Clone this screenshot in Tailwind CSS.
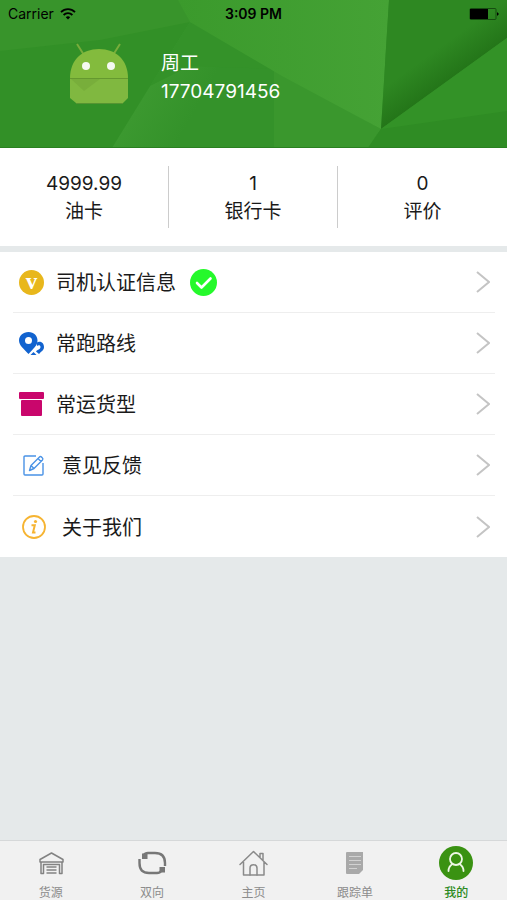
<!DOCTYPE html>
<html lang="zh-CN">
<head>
  <meta charset="UTF-8" />
  <meta name="viewport" content="width=device-width, initial-scale=1.0" />
  <title>我的</title>
  <script src="https://cdn.jsdelivr.net/npm/@tailwindcss/browser@4"></script>
</head>
<body class="min-h-screen flex flex-col bg-[#e5e9ea] text-[#1a1a1a] font-[Inter,'Noto_Sans_CJK_SC',sans-serif]">

  <!-- Profile header -->
  <header class="relative h-[148px] bg-[#329027] overflow-hidden">
    <svg class="absolute inset-0 w-full h-full" viewBox="0 0 507 148" preserveAspectRatio="none" aria-hidden="true">
      <defs>
        <linearGradient id="fold" gradientUnits="userSpaceOnUse" x1="425" y1="58" x2="443" y2="83">
          <stop offset="0" stop-color="#2e8822" />
          <stop offset="1" stop-color="#247619" />
        </linearGradient>
        <linearGradient id="light" x1="0" y1="0" x2="1" y2="0">
          <stop offset="0" stop-color="#3b9a2c" />
          <stop offset="1" stop-color="#45a235" />
        </linearGradient>
        <linearGradient id="lower" gradientUnits="userSpaceOnUse" x1="130" y1="110" x2="180" y2="138">
          <stop offset="0" stop-color="#3c9930" />
          <stop offset="1" stop-color="#34922a" />
        </linearGradient>
      </defs>
      <path d="M0 0H180L190 22L100 40L0 51Z" fill="#38942b" />
      <path d="M190 22L160 70L112 148H276V69Z" fill="url(#lower)" />
      <path d="M190 22L160 70L150 86L190 66L276 69Z" fill="#349229" />
      <path d="M274 68L381 129L368 148H274Z" fill="#3a972d" />
      <path d="M178 0H389L381 129L282 76L190 22Z" fill="url(#light)" />
      <path d="M389 0H507V38L381 129Z" fill="url(#fold)" />
      <path d="M507 38V148H368L381 129Z" fill="#339227" />
      <path d="M507 111V148H368L381 129Z" fill="#2f8c24" />
      <path d="M0 147.500H507" stroke="#2a8020" />
    </svg>

    <div class="relative grid grid-cols-3 items-center h-7 px-2 text-black">
      <div class="flex items-center gap-[6px]">
        <span class="text-[14px] leading-4">Carrier</span>
        <svg class="w-4 h-3" viewBox="0 0 16 12" fill="none" stroke="black" stroke-width="1.800" aria-hidden="true">
          <path d="M1 4.200C5 .2 11 .2 15 4.200M3.600 7C6 4.600 10 4.600 12.400 7" />
          <path d="M5.800 9.200C7 8 9 8 10.200 9.200L8 11.500Z" fill="black" stroke="none" />
        </svg>
      </div>
      <span class="text-center text-[14px] leading-4 font-semibold">3:09 PM</span>
      <svg class="justify-self-end w-[30px] h-3" viewBox="0 0 30 12" aria-hidden="true">
        <rect x="1" y=".5" width="26" height="11" rx="1" fill="none" stroke="#164d10" />
        <rect x="1" y="1" width="18" height="10" fill="black" />
        <path d="M28 4L30 6L28 8Z" fill="black" />
      </svg>
    </div>

    <div class="relative flex items-start gap-8 pl-[69px] pt-[14px]">
      <svg class="w-[60px] h-[63px]" viewBox="0 0 60 63" role="img" aria-label="头像">
        <path d="M8 2L15 13M51 2L44 13" stroke="#78ad3b" stroke-width="2" />
        <path d="M1 36C1 18 13 7 30 7S59 18 59 36Z" fill="#83bb3d" />
        <path d="M1 36H59V56L54 61H7L1 56Z" fill="#80b840" />
        <path d="M2 37H31L15 49Z" fill="#78ae3b" />
        <path d="M1 36.500H59" stroke="#65992f" />
        <path d="M7 61.500H54" stroke="#569431" />
        <circle cx="17" cy="24" r="4" fill="#f5f9f0" />
        <circle cx="42" cy="24" r="4" fill="#f5f9f0" />
      </svg>
      <div class="pt-2 text-[19px] leading-7 text-white">
        <p>周工</p>
        <p>17704791456</p>
      </div>
    </div>
  </header>

  <!-- Account numbers -->
  <section class="grid grid-cols-3 bg-white py-[18px] mb-[6px] text-center text-[19px] leading-7 divide-x divide-[#cccccc]">
    <a href="#oil" class="block pt-1 pb-[2px]"><p>4999.99</p><p>油卡</p></a>
    <a href="#bank" class="block pt-1 pb-[2px]"><p>1</p><p>银行卡</p></a>
    <a href="#reviews" class="block pt-1 pb-[2px]"><p>0</p><p>评价</p></a>
  </section>

  <!-- Menu -->
  <nav class="bg-white pl-[13px] pr-3 text-[20px] leading-7 divide-y divide-[#eeeeee]">
    <a href="#verify" class="flex items-center h-[61px] pl-[6px] pr-[5px]">
      <svg class="w-[25px] h-[25px] mr-3" viewBox="0 0 25 25" aria-hidden="true">
        <circle cx="12.500" cy="12.500" r="12.500" fill="#e8b71c" />
        <text x="12.500" y="18.500" text-anchor="middle" font-family="Liberation Serif, serif" font-weight="bold" font-size="23" fill="white">v</text>
      </svg>
      <span class="pt-[2px]">司机认证信息</span>
      <svg class="w-[27px] h-[27px] ml-[14px]" viewBox="0 0 27 27" aria-hidden="true">
        <circle cx="13.500" cy="13.500" r="13.500" fill="#25f92b" />
        <path d="M7 14L11.500 18.500L20.500 9.500" fill="none" stroke="white" stroke-width="2.600" stroke-linecap="round" stroke-linejoin="round" />
      </svg>
      <svg class="w-[14px] h-6 ml-auto" viewBox="0 0 14 24" fill="none" stroke="#c4c4c4" stroke-width="2" aria-hidden="true"><path d="M1 2L13 12L1 22" /></svg>
    </a>
    <a href="#routes" class="flex items-center h-[61px] pl-[6px] pr-[5px]">
      <svg class="w-[25px] h-[25px] mr-3" viewBox="0 0 25 25" aria-hidden="true">
        <path d="M17.500 12C20 9.500 25 11 25 16C25 19.500 22 20.500 20 23L17 20.500C18.500 18.500 21.500 18.500 21.500 16C21.500 14 19.500 13.500 18 15Z" fill="#1263cf" />
        <path d="M9.500 1C4 1 0 4.700 0 9.500C0 14.500 5 18 9.500 23C14 18 18.500 14.500 18.500 9.500C18.500 4.700 15 1 9.500 1Z" fill="#1263cf" />
        <circle cx="9.500" cy="9.500" r="3.500" fill="white" />
        <path d="M11.500 24L14.500 21L17.500 24Z" fill="#1263cf" />
      </svg>
      <span class="pt-[2px]">常跑路线</span>
      <svg class="w-[14px] h-6 ml-auto" viewBox="0 0 14 24" fill="none" stroke="#c4c4c4" stroke-width="2" aria-hidden="true"><path d="M1 2L13 12L1 22" /></svg>
    </a>
    <a href="#cargo" class="flex items-center h-[61px] pl-[6px] pr-[5px]">
      <svg class="w-[25px] h-[25px] mr-3" viewBox="0 0 25 25" fill="#c9066c" aria-hidden="true">
        <rect x="0" y="0" width="25" height="7" rx="1" />
        <rect x="2" y="8" width="21" height="16" rx="1" />
      </svg>
      <span class="pt-[2px]">常运货型</span>
      <svg class="w-[14px] h-6 ml-auto" viewBox="0 0 14 24" fill="none" stroke="#c4c4c4" stroke-width="2" aria-hidden="true"><path d="M1 2L13 12L1 22" /></svg>
    </a>
    <a href="#feedback" class="flex items-center h-[61px] pl-[9px] pr-[5px]">
      <svg class="w-[23px] h-[23px] mr-[17px]" viewBox="0 0 23 23" fill="none" stroke="#4a93e6" stroke-width="1.400" stroke-linejoin="round" aria-hidden="true">
        <path d="M14 2H3Q2 2 2 3V20Q2 21 3 21H20Q21 21 21 20V9" />
        <path d="M7.500 16.500L9 11.500L17.500 3Q18.500 2 20 3.500T20.500 6L12 14.500ZM9 11.500L12 14.500M16 4.500L19 7.500" />
      </svg>
      <span class="pt-[2px]">意见反馈</span>
      <svg class="w-[14px] h-6 ml-auto" viewBox="0 0 14 24" fill="none" stroke="#c4c4c4" stroke-width="2" aria-hidden="true"><path d="M1 2L13 12L1 22" /></svg>
    </a>
    <a href="#about" class="flex items-center h-[61px] pl-[9px] pr-[5px]">
      <svg class="w-6 h-6 mr-4" viewBox="0 0 24 24" aria-hidden="true">
        <circle cx="12" cy="12" r="11" fill="none" stroke="#f6b432" stroke-width="1.800" />
        <circle cx="13.500" cy="6.500" r="1.600" fill="#f6b432" />
        <path d="M9.500 10.200H12.800L11 17.500H13.500" fill="none" stroke="#f6b432" stroke-width="2" />
      </svg>
      <span class="pt-[2px]">关于我们</span>
      <svg class="w-[14px] h-6 ml-auto" viewBox="0 0 14 24" fill="none" stroke="#c4c4c4" stroke-width="2" aria-hidden="true"><path d="M1 2L13 12L1 22" /></svg>
    </a>
  </nav>

  <!-- Tab bar -->
  <footer class="mt-auto grid grid-cols-5 h-[60px] bg-[#f1f1f1] border-t border-[#d6d8d9] text-[12px] leading-4 text-[#8c8c8c]">
    <a href="#source" class="flex flex-col items-center pt-1">
      <svg class="w-9 h-9 mb-1" viewBox="0 0 36 36" fill="none" stroke="#828282" stroke-width="1.500" aria-hidden="true">
        <path d="M7 14.500L18.500 8L30 14.500V17H7ZM8 17V28.500H10.500V19.500H26.500V28.500H29V17" stroke-linejoin="round" />
        <path d="M13.500 22H23.500M13.500 25H23.500M13.500 28H23.500" />
      </svg>
      <span>货源</span>
    </a>
    <a href="#both" class="flex flex-col items-center pt-1">
      <svg class="w-9 h-9 mb-1" viewBox="0 0 36 36" fill="none" stroke="#777777" stroke-width="2.400" aria-hidden="true">
        <path d="M10 10Q11 8 14 8H21Q31 8 31 18V21M27 26Q26 28 23 28H15Q5.500 28 5.500 18V14" />
        <path d="M8 8.500H13.500V14H8ZM25.500 22H31V27.500H25.500Z" fill="#777777" stroke="none" />
      </svg>
      <span>双向</span>
    </a>
    <a href="#home" class="flex flex-col items-center pt-1">
      <svg class="w-9 h-9 mb-1" viewBox="0 0 36 36" fill="none" stroke="#8a8a8a" stroke-width="1.500" stroke-linejoin="round" stroke-linecap="round" aria-hidden="true">
        <path d="M5 19.500L18.500 6.500L32 19.500M8.500 17V30H29V17M25 12V8.500H28V15" />
        <path d="M15 30V23C15 18.500 22 18.500 22 23V30" />
      </svg>
      <span>主页</span>
    </a>
    <a href="#tracking" class="flex flex-col items-center pt-1">
      <svg class="w-9 h-9 mb-1" viewBox="0 0 36 36" aria-hidden="true">
        <path d="M10 7H26V25L22 29H10Q9 29 9 28V8Q9 7 10 7Z" fill="#a9a9a9" />
        <path d="M12 11.500H24M12 15.500H24M12 19.500H24M12 23.500H20" stroke="#d2d2d2" stroke-width="1" />
      </svg>
      <span>跟踪单</span>
    </a>
    <a href="#me" class="flex flex-col items-center pt-1 text-[#2c8a22] font-medium" aria-current="page">
      <svg class="w-9 h-9 mb-1" viewBox="0 0 36 36" fill="none" stroke="#edf7e6" stroke-width="1.800" stroke-linecap="round" aria-hidden="true">
        <circle cx="18" cy="18" r="17" fill="#3a9212" stroke="none" />
        <circle cx="18" cy="14" r="6" />
        <path d="M14.500 19C12 20.500 10.500 23 10.500 26M21.500 19C24 20.500 25.500 23 25.500 26" />
      </svg>
      <span>我的</span>
    </a>
  </footer>

</body>
</html>
